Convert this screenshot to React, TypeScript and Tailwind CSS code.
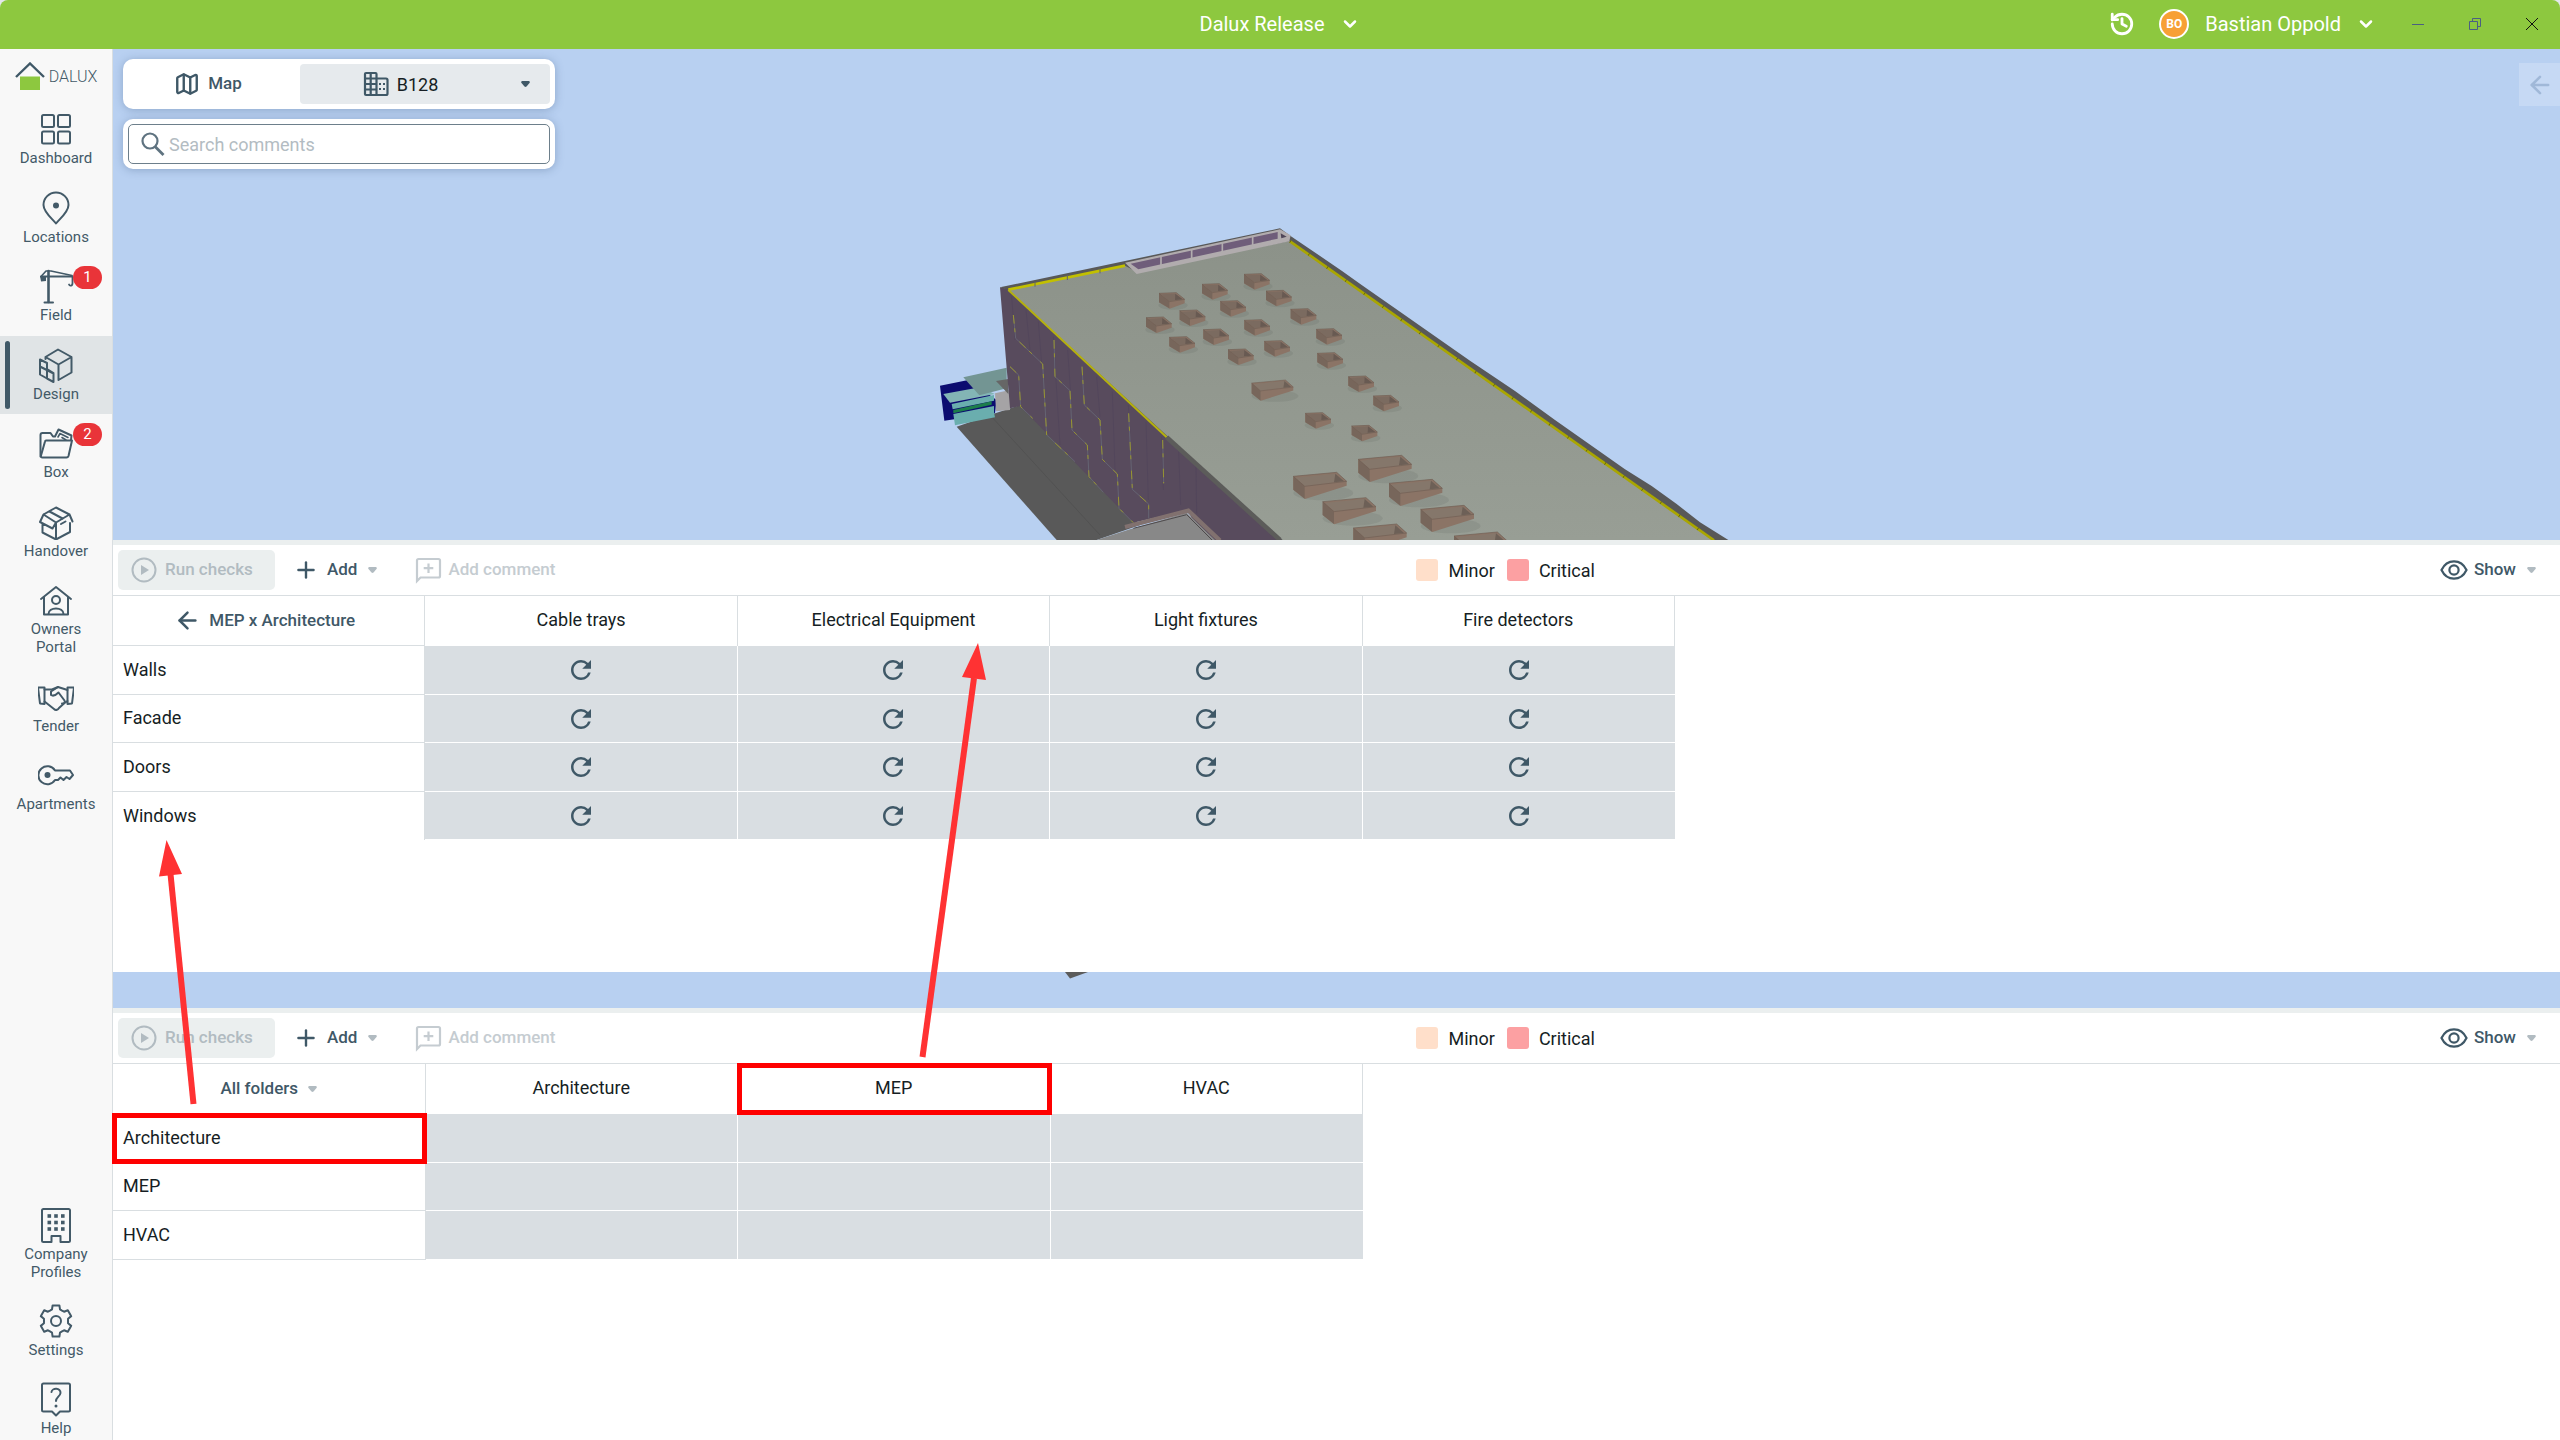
import type { ReactNode } from 'react';
import { ArrowLeft, ChevronDown, History, Map, Plus } from 'lucide-react';
import { MdRefresh } from 'react-icons/md';

function NavSvg({ children }: { children: ReactNode }) {
  return (
    <svg
      viewBox="0 0 36 36"
      className="size-9 shrink-0"
      fill="none"
      stroke="currentColor"
      strokeWidth="2"
      strokeLinejoin="round"
      strokeLinecap="round"
      aria-hidden="true"
    >
      {children}
    </svg>
  );
}

// six identical teeth rotated around the hub
const gearPath =
  [0, 60, 120, 180, 240, 300]
    .flatMap((deg) =>
      [
        [-6, -10.4],
        [-4, -11.6],
        [-3.4, -15.6],
        [3.4, -15.6],
        [4, -11.6],
        [6, -10.4],
      ].map(([x, y]) => {
        const a = (deg * Math.PI) / 180;
        const px = 18 + x * Math.cos(a) - y * Math.sin(a);
        const py = 18 + x * Math.sin(a) + y * Math.cos(a);
        return `${px.toFixed(2)} ${py.toFixed(2)}`;
      }),
    )
    .map((point, i) => (i === 0 ? `M${point}` : `L${point}`))
    .join('') + 'Z';

const mainNav = [
  {
    label: 'Dashboard',
    icon: (
      <>
        <rect x="4" y="4" width="12" height="12" rx="1.5" />
        <rect x="20" y="4" width="12" height="12" rx="1.5" />
        <rect x="4" y="20.5" width="12" height="12" rx="1.5" />
        <rect x="20" y="20.5" width="12" height="12" rx="1.5" />
      </>
    ),
  },
  {
    label: 'Locations',
    icon: (
      <>
        <path d="M18 33.5C14 28.5 5.500 22 5.500 15A12.5 12.5 0 0 1 30.5 15C30.5 22 22 28.5 18 33.5Z" />
        <circle cx="18" cy="15.5" r="3" fill="currentColor" stroke="none" />
      </>
    ),
  },
  {
    label: 'Field',
    badge: 1,
    icon: (
      <>
        <path d="M10.5 3V34" strokeWidth="2.6" />
        <path d="M6.5 34.5H15" />
        <path d="M3 8.500L8 3H13L34 7.5" strokeWidth="1.6" />
        <path d="M3 8.500H34.5V15C34.5 18.5 31.5 18 31 16.5" strokeWidth="1.8" />
        <path d="M2 8H8V13L3 13.5Z" fill="currentColor" stroke="none" />
      </>
    ),
  },
  {
    label: 'Design',
    active: true,
    icon: (
      <>
        <path d="M7.5 10L20 2.500L33.5 10V25.5L20.5 33V17.5L7.5 10ZM20.5 17.5L33.5 10M7.5 10V12" />
        <path d="M2 12.5L9 16V31.5L2 27.5ZM2 19.5L15.5 26.5V35L9 31.5M9 22L15.5 26" />
      </>
    ),
  },
  {
    label: 'Box',
    badge: 2,
    icon: (
      <>
        <path d="M2.5 31.5V10Q2.5 8 4.5 8H12.5L15 11.5H17L20.5 4.5L33.5 10.5L33 15" />
        <path d="M20 12L22 8.5L30 12.5M24 12.5L28 15" strokeWidth="1.6" />
        <path d="M8 15.5H34L30.5 31Q30 32.5 28.5 32.5H4.5Q2.5 32.5 3 30.5L7 16.5Q7.2 15.5 8 15.5Z" />
      </>
    ),
  },
  {
    label: 'Handover',
    icon: (
      <>
        <path d="M5.5 10.5L18 3.5L31.5 10.5L18 18.5L5.5 10.5L2 18L14.5 24.5L18 18.5V38M31.5 10.5L34.5 17.5M18 35.5L4.5 28.5V20M18 35.5L32 28V19" />
        <path d="M11.5 7.5L24.5 14.5M23 20L27.5 17.5" />
      </>
    ),
  },
  {
    label: 'Owners Portal',
    icon: (
      <>
        <path d="M3 17L18 5L33 17M6 15V32.5H30V15" />
        <circle cx="18" cy="18" r="4" />
        <path d="M10.5 32C10.5 24.5 25.5 24.5 25.5 32" />
      </>
    ),
  },
  {
    label: 'Tender',
    icon: (
      <>
        <path d="M0 8.5H6.500V25L2 24.5ZM36 8.500H29.5V25L34 24.5Z" />
        <path d="M6.5 10.5H14L20 8L29.5 11M6.5 22.5L16 30C18 32 20 30.5 21 29L26.5 24L29.5 22" />
        <path d="M20 8L13 12.5V16C16 18 19 15 20.5 13.5L26.5 21.5C27.5 23.5 26 25 24 24.5" />
      </>
    ),
  },
  {
    label: 'Apartments',
    icon: (
      <>
        <path d="M17 13.5H32L35 18L31.5 22L28.5 20L25.5 23L22.5 20.5L20 23H17A9 9 0 1 1 17 13.5Z" />
        <circle cx="9.5" cy="18" r="3" fill="currentColor" stroke="none" />
      </>
    ),
  },
];

const footerNav = [
  {
    label: 'Company Profiles',
    icon: (
      <>
        <path d="M22.5 35V29H13.5V35H5.5Q4 35 4 33.5V3.5Q4 2 5.5 2H30.5Q32 2 32 3.5V33.5Q32 35 30.5 35Z" />
        <g fill="currentColor" stroke="none">
          {[9, 15.5, 22].map((y) =>
            [9.5, 16.2, 23].map((x) => <rect key={`${x}-${y}`} x={x} y={y - 1.8} width="3.6" height="3.6" />),
          )}
        </g>
      </>
    ),
  },
  {
    label: 'Settings',
    icon: (
      <>
        <path d={gearPath} />
        <circle cx="18" cy="18" r="5" />
      </>
    ),
  },
  {
    label: 'Help',
    icon: (
      <>
        <path d="M5.5 2.5H30.5Q32 2.5 32 4V29Q32 30.5 30.5 30.5H22L18 34.5L14 30.5H5.5Q4 30.5 4 29V4Q4 2.5 5.5 2.5Z" />
        <path d="M13.5 11C14 6.5 23 6.5 22.5 12C22.2 15.5 18 16 18 20" />
        <circle cx="18" cy="25" r="1.5" fill="currentColor" stroke="none" />
      </>
    ),
  },
];

type NavEntry = { label: string; icon: ReactNode; badge?: number; active?: boolean };

function NavItem({ item }: { item: NavEntry }) {
  return (
    <li className={item.active ? 'relative bg-[#e0e4e6]' : 'relative'}>
      {item.active && <span className="absolute top-[5px] bottom-[5px] left-[5px] w-[5px] rounded-full bg-[#3f5867]" />}
      <a href="#" className="flex flex-col items-center px-4 pt-[11px] pb-[11px] text-center text-[15px] leading-[18px]">
        <NavSvg>{item.icon}</NavSvg>
        <span className="mt-[2px]">{item.label}</span>
      </a>
      {item.badge && (
        <span className="absolute top-[9px] right-[10px] flex h-[23px] w-[29px] items-center justify-center rounded-full bg-[#e93439] text-[15px] leading-none text-white">
          {item.badge}
        </span>
      )}
    </li>
  );
}

function Sidebar() {
  return (
    <aside className="flex w-[113px] shrink-0 flex-col overflow-hidden border-r border-[#d9dee1] bg-[#f8f8f8] text-[#435a68]">
      <a href="#" className="flex h-[51px] shrink-0 items-center justify-center gap-1 pt-1 text-[16px] font-light">
        <svg viewBox="0 0 30 30" className="size-[30px]" aria-hidden="true">
          <path d="M5 14.5H25V28H5Z" fill="#8dc83f" />
          <path d="M1 15L15 1.500L29 15" fill="none" stroke="#3f5867" strokeWidth="2.4" />
        </svg>
        DALUX
      </a>
      <nav aria-label="Modules">
        <ul className="flex h-[724px] flex-col justify-between">
          {mainNav.map((item) => (
            <NavItem key={item.label} item={item} />
          ))}
        </ul>
      </nav>
      <nav aria-label="Account" className="mt-auto -mb-2">
        <ul>
          {footerNav.map((item) => (
            <NavItem key={item.label} item={item} />
          ))}
        </ul>
      </nav>
    </aside>
  );
}

function Caret({ className }: { className: string }) {
  return (
    <svg viewBox="0 0 9 6" className={`h-[6px] w-[9px] shrink-0 ${className}`} fill="currentColor" aria-hidden="true">
      <path d="M1.2 0H7.8Q9.5 .6 8.5 2L5.5 5.5Q4.5 6.4 3.5 5.5L.5 2Q-.5 .6 1.2 0Z" />
    </svg>
  );
}

function TitleBar() {
  return (
    <header className="grid h-[49px] grid-cols-[1fr_auto_1fr] items-center rounded-t-lg bg-[#8dc83f] pb-[2px] text-[20px] text-white">
      <span />
      <button type="button" className="flex items-center gap-4">
        Dalux Release
        <ChevronDown className="size-5" strokeWidth={3} />
      </button>
      <div className="flex items-center justify-end">
        <button type="button" aria-label="History" className="mr-[24px]">
          <History className="size-[26px]" strokeWidth={2.6} />
        </button>
        <button type="button" className="mr-[13px] flex items-center">
          <span className="mr-4 flex size-[30px] items-center justify-center rounded-full border-2 border-white bg-[#f7a035] text-[12px] font-bold">
            BO
          </span>
          Bastian Oppold
          <ChevronDown className="ml-[15px] size-5" strokeWidth={3} />
        </button>
        <div className="flex">
          <button type="button" aria-label="Minimize" className="flex w-[57px] justify-center">
            <svg viewBox="0 0 12 12" className="size-3" stroke="#4b5f82" fill="none">
              <path d="M0 6.5H12" />
            </svg>
          </button>
          <button type="button" aria-label="Restore" className="flex w-[57px] justify-center">
            <svg viewBox="0 0 12 12" className="size-3" stroke="#4b5f82" fill="none">
              <path d="M.5 3.5H8.5V11.5H.5ZM3.5 3.5V.5H11.5V8.5H8.5" />
            </svg>
          </button>
          <button type="button" aria-label="Close" className="flex w-[57px] justify-center">
            <svg viewBox="0 0 12 12" className="size-3" stroke="#111" fill="none">
              <path d="M0 0L12 12M12 0L0 12" />
            </svg>
          </button>
        </div>
      </div>
    </header>
  );
}

const smallUnits = [
  [777, 280], [906, 253], [1032, 223], [1098, 273], [839, 332], [961, 304], [1172, 328],
  [738, 353], [910, 389], [1033, 361], [1249, 388], [808, 412], [984, 449], [1093, 424],
  [1252, 460], [1345, 530], [1420, 588], [1216, 640], [1355, 678],
];

const largeUnits = [
  [1375, 766], [1180, 817], [1467, 838], [1268, 893], [1562, 916], [1360, 972], [1662, 996],
];

// narrow metal joints running over the facade panels
const facadeJoints = [
  'M340 345L347 415L428 492L440 705L525 785',
  'M330 500L356 525L362 620L398 655',
  'M462 420L465 530L510 572L516 690L562 735L567 830L610 877',
  'M546 500L553 615L600 660L607 778L652 822L657 925L700 968',
  'M686 640L697 868L746 912V955',
  'M788 720L791 850',
];

const facadePanels = [
  'M335 290L345 420', 'M378 330L390 450', 'M415 365L425 490', 'M460 410L480 735', 'M503 450L512 580',
  'M590 530L600 650', 'M637 575L645 810', 'M685 615L690 700', 'M738 665L745 900', 'M785 710L790 870',
  'M836 755L842 915', 'M888 800L890 940',
];

function LargeUnit() {
  return (
    <>
      <ellipse cx="90" cy="62" rx="90" ry="22" fill="#596058" opacity=".15" />
      <path d="M0 12L130 0L160 27V40L35 80L0 52Z" fill="#8b7466" />
      <path d="M6 16L126 4L152 27L34 41Z" fill="#85776b" />
      <path d="M126 4L152 27L122 30Z" fill="#6d6057" />
      <path d="M0 12L34 42V79L0 52Z" fill="#77665b" />
      <path d="M0 12L130 0L160 27L34 42Z" fill="none" stroke="#705f55" strokeWidth="2" />
    </>
  );
}

function BuildingModel() {
  return (
    <svg viewBox="90 60 2439 960" className="h-80 w-[813px]" role="img" aria-label="3D model of building B128">
      <defs>
        <linearGradient id="roof" x1="0" y1="0" x2="0" y2="1">
          <stop offset="0" stopColor="#8c9289" />
          <stop offset="1" stopColor="#989e95" />
        </linearGradient>
      </defs>
      <path d="M170 680L270 645L360 615L720 975L590 1020H470Z" fill="#595959" />
      <path d="M270 645L600 1005" stroke="#4f4f4f" strokeWidth="2" />

      <path d="M120 557L205 540L290 600L285 640L133 662Z" fill="#0c0c70" />
      <path d="M130 582L240 562L285 582L150 608Z" fill="#83b5b5" />
      <path d="M155 612L282 585V602L158 628ZM160 642L282 618V636L285 652L165 676Z" fill="#6aaeae" />
      <path d="M160 630L275 604V614L160 640Z" fill="#1c7d4b" />
      <path d="M190 532L320 503V565L238 586Z" fill="#739593" />
      <path d="M285 580L330 570V630L288 634Z" fill="#a5a3a5" />
      <path d="M288 543L325 537V582Z" fill="#666" />

      <path d="M300 262L330 268L810 712L1140 1020H900L865 930L700 968L360 618L330 625Z" fill="#584b5d" />
      <path d={facadePanels.join('')} stroke="#50445a" strokeWidth="2" fill="none" />
      <path d={facadeJoints.join('')} stroke="#656473" strokeWidth="3" fill="none" />
      <path d={facadeJoints.join('')} stroke="#98952f" strokeWidth="3" strokeDasharray="26 14 12 34" fill="none" />

      <path
        d="M300 262L1140 85L1175 110L1325 212L1385 255L1485 325L1710 482L1845 573L1965 660L2110 762L2175 808L2255 858L2330 912L2400 967L2485 1020H1140L800 712L325 270Z"
        fill="#585858"
      />
      <path d="M325 270L675 197L710 215L1168 123L2440 1020H1148L802 708Z" fill="url(#roof)" />
      <path d="M325 269L675 197" stroke="#c2c000" strokeWidth="8" />
      <path d="M325 270L800 712" stroke="#b5b10e" strokeWidth="6" />
      <path d="M800 712L1140 1020" stroke="#5c5c5a" strokeWidth="14" />
      <path d="M1170 124L2442 1021" stroke="#a9a600" strokeWidth="8" />
      <path d="M1170 124L2442 1021" stroke="#59590f" strokeWidth="8" strokeDasharray="2 66" />
      <path d="M405 245V260M502 225V240M600 205V220" stroke="#666" strokeWidth="3" />

      <path d="M675 188L1140 88L1172 106L1168 124L710 222Z" fill="#b1acae" />
      <path d="M692 191L1133 96V116L715 208Z" fill="#6f5d7a" />
      <path d="M1142 100L1160 110L1144 115Z" fill="#4f4658" />
      <path d="M783 168V196M875 148V176M967 128V156M1058 108V136" stroke="#b1acae" strokeWidth="5" />

      <path d="M590 1020L690 988L860 938L945 1020Z" fill="#888" />
      <path d="M675 981L865 932L960 1022" stroke="#81716f" strokeWidth="13" fill="none" />
      <path d="M700 985L860 944L938 1022" stroke="#4e4a4c" strokeWidth="3" fill="none" />

      {smallUnits.map(([x, y]) => (
        <g key={`${x}-${y}`} transform={`translate(${x} ${y})`}>
          <ellipse cx="42" cy="36" rx="44" ry="13" fill="#596058" opacity=".15" />
          <path d="M0 0L52 -2L77 18V30L32 46L0 27Z" fill="#8b7466" />
          <path d="M6 3L49 1L71 18L30 24Z" fill="#7b6b60" />
          <path d="M49 1L71 18L48 20Z" fill="#685a52" />
          <path d="M0 0L31 25V45L0 27Z" fill="#77665b" />
          <path d="M0 0L52 -2L77 18L31 25Z" fill="none" stroke="#705f55" strokeWidth="2" />
        </g>
      ))}
      {largeUnits.map(([x, y]) => (
        <g key={`${x}-${y}`} transform={`translate(${x} ${y})`}>
          <LargeUnit />
        </g>
      ))}
      <g transform="translate(1055 540) scale(.78)">
        <LargeUnit />
      </g>
    </svg>
  );
}

function Viewport() {
  return (
    <section aria-label="Model" className="relative flex h-[491px] items-end justify-center overflow-hidden bg-[#b8d0f1]">
      <BuildingModel />
      <div className="absolute top-[10px] left-[10px] flex w-[432px] flex-col gap-[10px] text-[18px]">
        <div className="flex h-[50px] rounded-[10px] bg-white p-[5px] shadow-[0_1px_8px_rgba(60,90,130,0.35)]">
          <button type="button" className="flex w-[172px] items-center justify-center gap-2 pr-3 text-[17px] font-medium text-[#3f5867]">
            <Map className="size-[26px]" strokeWidth={2.2} />
            Map
          </button>
          <div className="flex flex-1 items-center rounded bg-[#e6eaed] text-[#161e24]">
            <div className="flex flex-1 items-center justify-center gap-2">
              <svg viewBox="0 0 26 26" className="size-[26px] text-[#3f5867]" fill="none" stroke="currentColor" strokeWidth="2.2" aria-hidden="true">
                <path d="M2 3Q2 2 3 2H12.5Q13.5 2 13.5 3V24H3Q2 24 2 23ZM2 7.5H13.5M2 13H13.5M2 18.5H13.5M7.7 2V24M13.5 7.5H23Q24.5 7.5 24.5 9V22.5Q24.5 24 23 24H13.5" />
                <path d="M16 13H18M20 13H22M16 18H18M20 18H22" />
              </svg>
              <select aria-label="Building" className="field-sizing-content appearance-none bg-transparent">
                <option>B128</option>
              </select>
            </div>
            <Caret className="mr-5 ml-5 text-[#3f5867]" />
          </div>
        </div>
        <label className="flex h-[50px] rounded-[10px] bg-white p-[5px] shadow-[0_1px_8px_rgba(60,90,130,0.35)]">
          <span className="flex flex-1 items-center gap-1 rounded-[5px] border border-[#6d7f8b] pl-3">
            <svg viewBox="0 0 24 24" className="size-6 text-[#5f7380]" fill="none" stroke="currentColor" strokeWidth="2.2" aria-hidden="true">
              <circle cx="9" cy="9" r="7.5" />
              <path d="M14 14.5L22.5 23" strokeWidth="2.8" />
            </svg>
            <input type="text" aria-label="Search comments" placeholder="Search comments" className="min-w-0 flex-1 outline-none placeholder:text-[#b3bcc2]" />
          </span>
        </label>
      </div>
      <button
        type="button"
        aria-label="Expand panel"
        className="absolute top-[14px] right-0 flex h-[43px] w-[41px] items-center justify-center bg-[#c6d9f4] text-[#a0b8d8]"
      >
        <ArrowLeft className="size-[28px]" strokeWidth={2.2} />
      </button>
    </section>
  );
}

function Toolbar() {
  return (
    <div className="flex h-[51px] items-center justify-between border-b border-[#d9dee1] pr-[24px] pl-[5px] text-[17px] font-medium text-[#3f5867]">
      <div className="flex items-center">
        <button type="button" disabled className="flex h-10 w-[157px] items-center gap-2 rounded-[5px] bg-[#ebefef] pl-[13px] text-[#b1bbc1]">
          <svg viewBox="0 0 26 26" className="size-[26px]" fill="none" stroke="currentColor" strokeWidth="2" aria-hidden="true">
            <circle cx="13" cy="13" r="11.5" />
            <path d="M10 8L18 13L10 18Z" fill="currentColor" stroke="none" />
          </svg>
          Run checks
        </button>
        <button type="button" className="ml-[18px] flex items-center">
          <Plus className="mr-2 size-[26px]" strokeWidth={2.2} />
          Add
          <Caret className="ml-[11px] text-[#b1bbc1]" />
        </button>
        <button type="button" disabled className="ml-[37px] flex items-center gap-[6px] pr-4 text-[#c5ccd1]">
          <svg viewBox="0 0 28 28" className="size-[28px]" fill="none" stroke="currentColor" strokeWidth="2.2" aria-hidden="true">
            <path d="M3 25V4.5Q3 3 4.5 3H24.5Q26 3 26 4.5V20Q26 21.5 24.5 21.5H6.5ZM14.5 7.5V17M9.7 12.2H19.3" />
          </svg>
          Add comment
        </button>
      </div>
      <div className="flex items-center text-[18px] font-normal text-[#161e24]">
        <span className="mr-[10px] size-[22px] rounded-[3px] bg-[#ffdfca]" />
        Minor
        <span className="mr-[10px] ml-3 size-[22px] rounded-[3px] bg-[#fca0a2]" />
        Critical
      </div>
      <button type="button" className="flex items-center">
        <svg viewBox="0 0 28 20" className="mr-[6px] h-5 w-7" fill="none" stroke="currentColor" strokeWidth="2.2" aria-hidden="true">
          <path d="M1.500 10C7 -1.5 21 -1.5 26.5 10C21 21.5 7 21.5 1.5 10Z" />
          <circle cx="14" cy="10" r="4.6" />
        </svg>
        Show
        <Caret className="ml-[11px] text-[#b1bbc1]" />
      </button>
    </div>
  );
}

type MatrixProps = {
  className: string;
  corner: ReactNode;
  columns: string[];
  rows: string[];
  pending?: boolean;
  markedColumn?: string;
  markedRow?: string;
};

function ClashMatrix({ className, corner, columns, rows, pending, markedColumn, markedRow }: MatrixProps) {
  const mark = ' outline-[5px] outline-offset-[-4px] outline-[#fe0000] outline-solid';
  return (
    <table className={`table-fixed border-separate border-spacing-0 text-[18px] text-[#161e24] ${className}`}>
      <thead>
        <tr className="h-[50px]">
          <th scope="col" className="border-r border-b border-[#d9dee1] p-0 text-[17px] font-medium text-[#3f5867]">
            {corner}
          </th>
          {columns.map((column) => (
            <th
              key={column}
              scope="col"
              className={'border-r border-[#d9dee1] p-0 pb-1 font-normal' + (column === markedColumn ? mark : '')}
            >
              {column}
            </th>
          ))}
        </tr>
      </thead>
      <tbody>
        {rows.map((row, i) => (
          <tr key={row} className="odd:h-[49px] even:h-12">
            <th
              scope="row"
              className={
                'border-r border-[#d9dee1] p-0 pb-[2px] pl-[10px] text-left font-normal' +
                (pending && i === rows.length - 1 ? '' : ' border-b') +
                (row === markedRow ? mark : '')
              }
            >
              {row}
            </th>
            {columns.map((column) => (
              <td key={column} className="border-r border-b border-white bg-[#d9dee2] p-0 last:border-r-0">
                {pending && (
                  <button type="button" aria-label={`Check ${row} against ${column}`} className="mx-auto block text-[#3f5867]">
                    <MdRefresh className="size-[30px]" />
                  </button>
                )}
              </td>
            ))}
          </tr>
        ))}
      </tbody>
    </table>
  );
}

function Arrows() {
  return (
    <svg className="pointer-events-none absolute top-[600px] left-[140px] h-[520px] w-[860px]" viewBox="140 600 860 520" aria-hidden="true">
      <g stroke="#ff3233" strokeWidth="6">
        <path d="M193.500 1104L170.500 874" />
        <path d="M922.500 1057L974 678" />
      </g>
      <path d="M166.500 840L159 876.500L182 874ZM978 643L962 677L986 680Z" fill="#ff3233" />
    </svg>
  );
}

export default function App() {
  return (
    <div className="relative flex min-h-screen flex-col bg-[#e4e7ea] font-['Roboto',sans-serif]">
      <TitleBar />
      <div className="flex flex-1 overflow-hidden bg-white">
        <Sidebar />
        <main className="flex min-w-0 flex-1 flex-col">
          <Viewport />
          <section aria-label="Clash checks by type" className="min-h-[432px] border-t-[5px] border-[#ebefef] bg-white">
            <Toolbar />
            <ClashMatrix
              className="w-[1562px]"
              pending
              columns={['Cable trays', 'Electrical Equipment', 'Light fixtures', 'Fire detectors']}
              rows={['Walls', 'Facade', 'Doors', 'Windows']}
              corner={
                <button type="button" className="mx-auto flex items-center gap-2 pr-2">
                  <ArrowLeft className="size-[27px]" strokeWidth={2.2} />
                  MEP x Architecture
                </button>
              }
            />
          </section>
          <div className="flex h-9 justify-center bg-[#b8d0f1]">
            <svg viewBox="0 0 24 7" className="mr-[520px] h-[7px] w-6" aria-hidden="true">
              <path d="M0 0H23L5 6.5Z" fill="#5b5b5b" />
            </svg>
          </div>
          <section aria-label="Clash checks by folder" className="flex-1 border-t-[5px] border-[#ebefef] bg-white">
            <Toolbar />
            <ClashMatrix
              className="w-[1250px]"
              columns={['Architecture', 'MEP', 'HVAC']}
              rows={['Architecture', 'MEP', 'HVAC']}
              markedColumn="MEP"
              markedRow="Architecture"
              corner={
                <div className="flex items-center justify-center gap-[10px]">
                  <select aria-label="Folder" className="field-sizing-content appearance-none bg-transparent font-medium">
                    <option>All folders</option>
                  </select>
                  <Caret className="text-[#b1bbc1]" />
                </div>
              }
            />
          </section>
        </main>
      </div>
      <Arrows />
    </div>
  );
}
